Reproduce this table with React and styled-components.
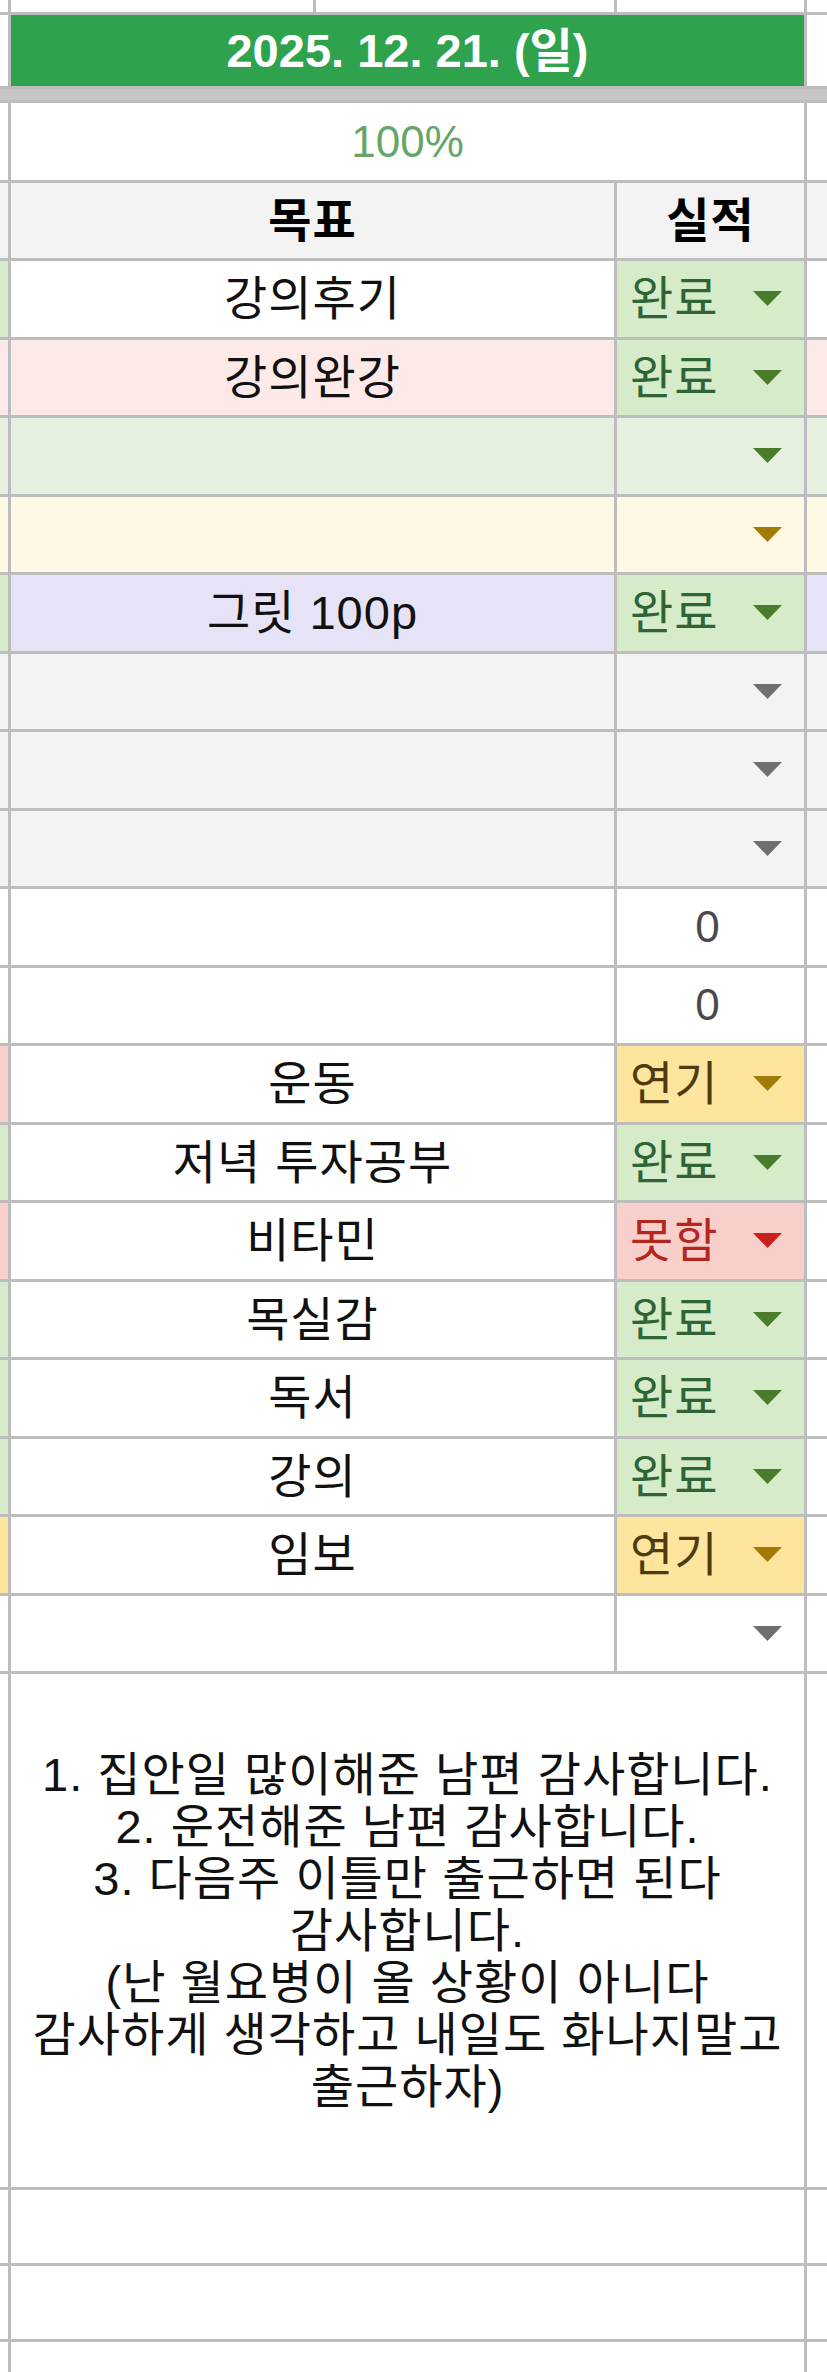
import React from "react";
import styled, { createGlobalStyle } from "styled-components";

const GlobalStyle = createGlobalStyle`
  html, body {
    margin: 0;
    padding: 0;
    background: #fff;
  }
  body {
    font-family: "Liberation Sans", "Noto Sans CJK KR", sans-serif;
    color: #111;
  }
`;

const GRID = "#bdbdbd";
const COLS = "8px 603px 187px 1fr";

const palette = {
  white: "#ffffff",
  gray: "#f3f3f3",
  pink: "#fde9e7",
  mint: "#e5f0de",
  cream: "#fff8e4",
  lavender: "#e7e3f6",
};

const STATUS = {
  완료: { bg: "#d6ebc9", fg: "#2f6436", arrow: "#4a7c2c" },
  연기: { bg: "#fee59e", fg: "#4f3c0e", arrow: "#a17a06" },
  못함: { bg: "#f9cfcb", fg: "#b3261e", arrow: "#c8201b" },
};

const Sheet = styled.div`
  width: 827px;
  height: 2372px;
  overflow: hidden;
  display: flex;
  flex-direction: column;
  gap: 3px;
  background: ${GRID};
`;

const Row = styled.div`
  display: grid;
  grid-template-columns: ${({ $cols }) => $cols || COLS};
  gap: 3px;
  height: ${({ $h }) => $h}px;
  flex-shrink: 0;
`;

const Cell = styled.div`
  grid-column: span ${({ $span }) => $span || 1};
  background: ${({ $bg }) => $bg || "#fff"};
  display: flex;
  align-items: center;
  justify-content: center;
  min-width: 0;
  font-size: 47px;
  font-weight: 400;
  line-height: 1;
  letter-spacing: 1px;
  white-space: nowrap;
`;

const Band = styled(Cell)`
  background: #c6c6c6;
`;

const DateCell = styled(Cell)`
  background: #2fa24d;
  color: #fff;
  font-weight: 700;
  font-size: 47px;
  letter-spacing: 0;
`;

const Percent = styled(Cell)`
  color: #66a568;
  font-size: 44px;
  letter-spacing: 0;
`;

const HeadCell = styled(Cell)`
  background: ${palette.gray};
  font-weight: 700;
  color: #000;
`;

const StatusBox = styled(Cell)`
  justify-content: ${({ $center }) => ($center ? "center" : "space-between")};
  padding: 0 22px 0 13px;
  color: ${({ $fg }) => $fg || "#111"};
`;

const Zero = styled.span`
  color: #4a4a4a;
  font-size: 44px;
  margin-left: 4px;
`;

const Note = styled(Cell)`
  flex-direction: column;
  line-height: 52px;
  text-align: center;
  color: #111;
`;

function Arrow({ color }) {
  return (
    <svg width="29" height="15" viewBox="0 0 29 15">
      <polygon points="0,0 29,0 14.5,15" fill={color} />
    </svg>
  );
}

const rows = [
  { left: STATUS.완료.bg, goal: "강의후기", bg: palette.white, status: "완료" },
  { left: palette.pink, goal: "강의완강", bg: palette.pink, status: "완료" },
  { left: palette.mint, bg: palette.mint, arrow: "#4a7c2c" },
  { left: palette.cream, bg: palette.cream, arrow: "#a17a06" },
  { left: STATUS.완료.bg, goal: "그릿 100p", bg: palette.lavender, status: "완료" },
  { left: palette.gray, bg: palette.gray, arrow: "#6f6f6f" },
  { left: palette.gray, bg: palette.gray, arrow: "#6f6f6f" },
  { left: palette.gray, bg: palette.gray, arrow: "#6f6f6f" },
  { left: palette.white, bg: palette.white, value: "0" },
  { left: palette.white, bg: palette.white, value: "0" },
  { left: STATUS.못함.bg, goal: "운동", bg: palette.white, status: "연기" },
  { left: STATUS.완료.bg, goal: "저녁 투자공부", bg: palette.white, status: "완료" },
  { left: STATUS.못함.bg, goal: "비타민", bg: palette.white, status: "못함" },
  { left: STATUS.완료.bg, goal: "목실감", bg: palette.white, status: "완료" },
  { left: STATUS.완료.bg, goal: "독서", bg: palette.white, status: "완료" },
  { left: STATUS.완료.bg, goal: "강의", bg: palette.white, status: "완료" },
  { left: STATUS.연기.bg, goal: "임보", bg: palette.white, status: "연기" },
  { left: palette.white, bg: palette.white, arrow: "#6f6f6f" },
];

const noteLines = [
  "1. 집안일 많이해준 남편 감사합니다.",
  "2. 운전해준 남편 감사합니다.",
  "3. 다음주 이틀만 출근하면 된다",
  "감사합니다.",
  "(난 월요병이 올 상황이 아니다",
  "감사하게 생각하고 내일도 화나지말고",
  "출근하자)",
];

function Status({ row }) {
  if (row.value) {
    return (
      <StatusBox $bg={row.bg} $center>
        <Zero>{row.value}</Zero>
      </StatusBox>
    );
  }
  const s = row.status ? STATUS[row.status] : null;
  return (
    <StatusBox $bg={s ? s.bg : row.bg} $fg={s && s.fg}>
      <span>{row.status || ""}</span>
      <Arrow color={s ? s.arrow : row.arrow} />
    </StatusBox>
  );
}

export default function App() {
  return (
    <>
      <GlobalStyle />
      <Sheet>
        <Row $h={12} $cols="8px 302px 298px 187px 1fr">
          <Cell />
          <Cell />
          <Cell />
          <Cell />
          <Cell />
        </Row>
        <Row $h={71}>
          <Cell />
          <DateCell $span={2}>2025. 12. 21. (일)</DateCell>
          <Cell />
        </Row>
        <Row $h={11}>
          <Band $span={4} />
        </Row>
        <Row $h={77}>
          <Cell />
          <Percent $span={2}>100%</Percent>
          <Cell />
        </Row>
        <Row $h={75}>
          <HeadCell />
          <HeadCell>목표</HeadCell>
          <HeadCell>실적</HeadCell>
          <HeadCell />
        </Row>
        {rows.map((row, i) => (
          <Row $h={75.5} key={i}>
            <Cell $bg={row.left} />
            <Cell $bg={row.bg}>{row.goal || ""}</Cell>
            <Status row={row} />
            <Cell $bg={row.bg} />
          </Row>
        ))}
        <Row $h={513}>
          <Cell />
          <Note $span={2}>
            {noteLines.map((line) => (
              <div key={line}>{line}</div>
            ))}
          </Note>
          <Cell />
        </Row>
        <Row $h={73}>
          <Cell />
          <Cell $span={2} />
          <Cell />
        </Row>
        <Row $h={73}>
          <Cell />
          <Cell $span={2} />
          <Cell />
        </Row>
        <Row $h={73}>
          <Cell />
          <Cell $span={2} />
          <Cell />
        </Row>
      </Sheet>
    </>
  );
}
